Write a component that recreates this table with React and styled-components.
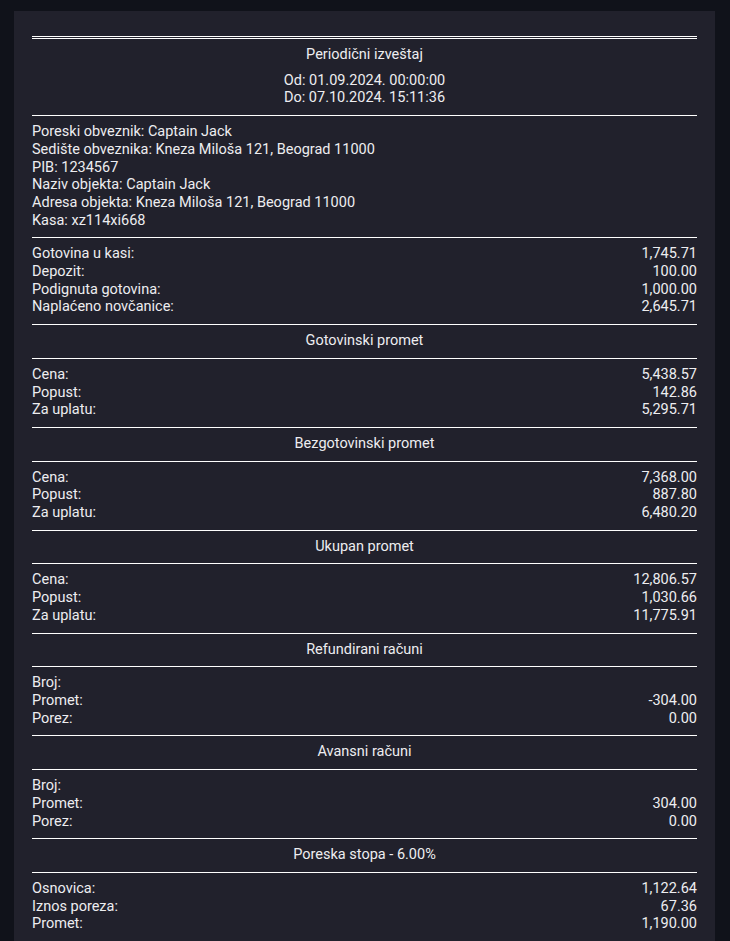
import React from "react";
import styled, { createGlobalStyle } from "styled-components";

const Global = createGlobalStyle`
  html, body { margin: 0; padding: 0; background: #10121a; }
  body { font-family: Roboto, "Noto Sans", sans-serif; color: #ededf0; }
`;

const Page = styled.div`
  padding: 11px 15px 0 14px;
`;

const Panel = styled.div`
  background: #21212c;
  padding: 25px 18px 20px;
  font-size: 14.5px;
  line-height: 17.7px;
`;

const Header = styled.div`
  border-top: 3px double #ffffff;
  padding: 7px 0 8px;
  text-align: center;
`;

const HeaderTitle = styled.div`
  margin-bottom: 8px;
`;

const Block = styled.div`
  border-top: 1px solid #ffffff;
  padding: 7px 0 8px;
  text-align: ${(p) => (p.$center ? "center" : "left")};
`;

const Row = styled.div`
  display: flex;
  justify-content: space-between;
  gap: 16px;
`;

const Value = styled.span`
  text-align: right;
`;

const data = [
  {
    rows: [
      ["Gotovina u kasi:", "1,745.71"],
      ["Depozit:", "100.00"],
      ["Podignuta gotovina:", "1,000.00"],
      ["Naplaćeno novčanice:", "2,645.71"],
    ],
  },
  {
    title: "Gotovinski promet",
    rows: [
      ["Cena:", "5,438.57"],
      ["Popust:", "142.86"],
      ["Za uplatu:", "5,295.71"],
    ],
  },
  {
    title: "Bezgotovinski promet",
    rows: [
      ["Cena:", "7,368.00"],
      ["Popust:", "887.80"],
      ["Za uplatu:", "6,480.20"],
    ],
  },
  {
    title: "Ukupan promet",
    rows: [
      ["Cena:", "12,806.57"],
      ["Popust:", "1,030.66"],
      ["Za uplatu:", "11,775.91"],
    ],
  },
  {
    title: "Refundirani računi",
    rows: [
      ["Broj:", ""],
      ["Promet:", "-304.00"],
      ["Porez:", "0.00"],
    ],
  },
  {
    title: "Avansni računi",
    rows: [
      ["Broj:", ""],
      ["Promet:", "304.00"],
      ["Porez:", "0.00"],
    ],
  },
  {
    title: "Poreska stopa - 6.00%",
    rows: [
      ["Osnovica:", "1,122.64"],
      ["Iznos poreza:", "67.36"],
      ["Promet:", "1,190.00"],
    ],
  },
];

const info = [
  "Poreski obveznik: Captain Jack",
  "Sedište obveznika: Kneza Miloša 121, Beograd 11000",
  "PIB: 1234567",
  "Naziv objekta: Captain Jack",
  "Adresa objekta: Kneza Miloša 121, Beograd 11000",
  "Kasa: xz114xi668",
];

export default function App() {
  return (
    <>
      <Global />
      <Page>
        <Panel>
          <Header>
            <HeaderTitle>Periodični izveštaj</HeaderTitle>
            <div>Od: 01.09.2024. 00:00:00</div>
            <div>Do: 07.10.2024. 15:11:36</div>
          </Header>
          <Block>
            {info.map((t) => (
              <div key={t}>{t}</div>
            ))}
          </Block>
          {data.map((sec, i) => (
            <React.Fragment key={i}>
              {sec.title && <Block $center>{sec.title}</Block>}
              <Block>
                {sec.rows.map(([l, v], j) => (
                  <Row key={j}>
                    <span>{l}</span>
                    <Value>{v}</Value>
                  </Row>
                ))}
              </Block>
            </React.Fragment>
          ))}
        </Panel>
      </Page>
    </>
  );
}
